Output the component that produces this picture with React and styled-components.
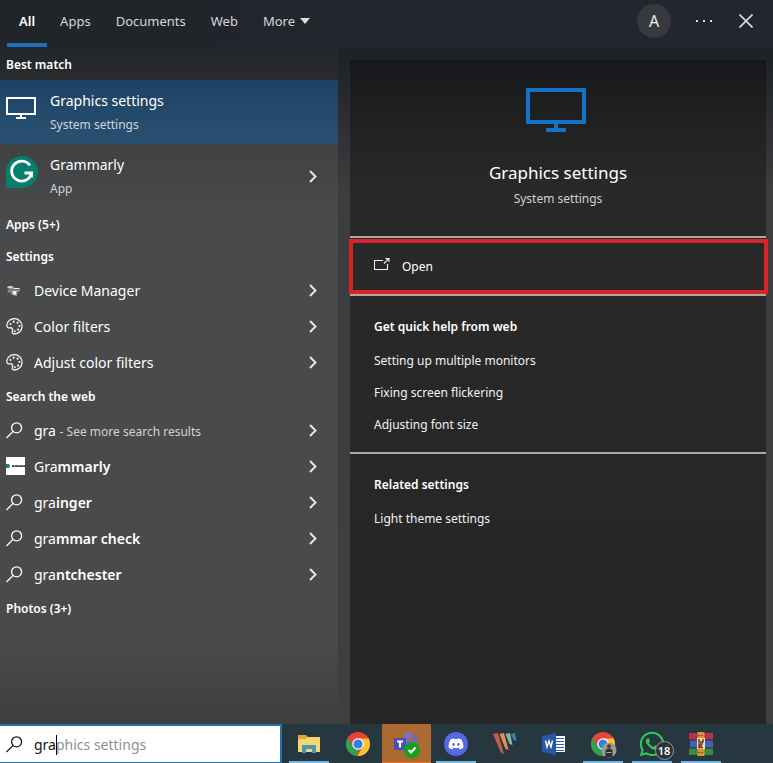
import React from 'react';
import styled, { createGlobalStyle } from 'styled-components';
import { FaDiscord, FaWhatsapp } from 'react-icons/fa';

const Global = createGlobalStyle`
  * { box-sizing: border-box; }
  body { margin: 0; background: #232323; font-family: "Noto Sans", "Open Sans", sans-serif; color: #fff; }
  button, input { font: inherit; color: inherit; }
  h2, h3, p { margin: 0; padding: 0; font: inherit; }
`;

const Page = styled.div`
  min-height: 100vh;
  display: flex;
  flex-direction: column;
`;

const Flyout = styled.main`
  flex: 1;
  display: flex;
  flex-direction: column;
  background: linear-gradient(180deg, #212429 0, #1f2226 60px, #3c3d3f 190px, #3e3f3f 100%);
`;

const Header = styled.header`
  display: flex;
  justify-content: space-between;
  height: 47px;
  background: linear-gradient(90deg, #212528, #22262e 50%, #23262e);
`;

const Tabs = styled.nav`
  display: flex;
  padding-left: 7px;
`;

const Tab = styled.button`
  display: flex;
  align-items: center;
  gap: 5px;
  padding: 0 12px 2px;
  margin-right: 1px;
  border: 0;
  border-bottom: 4px solid ${p => (p.$active ? '#1b6fbd' : 'transparent')};
  background: none;
  font-size: 13px;
  font-weight: ${p => (p.$active ? 600 : 400)};
  color: ${p => (p.$active ? '#fff' : '#d5d6d8')};
`;

const HeaderActions = styled.div`
  display: flex;
  align-items: center;
  gap: 8px;
  padding: 0 10px 5px 0;
`;

const IconButton = styled.button`
  display: grid;
  place-items: center;
  width: 34px;
  height: 34px;
  padding: 0;
  border: 0;
  border-radius: 50%;
  font-size: 16px;
  background: ${p => (p.$filled ? '#36393e' : 'none')};
  margin-right: ${p => (p.$filled ? '8px' : '0')};
  color: #eee;
`;

const Columns = styled.div`
  flex: 1;
  display: grid;
  grid-template-columns: minmax(0, 338fr) minmax(0, 435fr);
`;

const Results = styled.section`
  padding-top: 1px;
  background: linear-gradient(180deg, #23262a 0, #292b2f 40px, #414243 100px, #494a4b 170px, #4a4a4a 550px, #484949 600px, #3e4040 100%);
`;

const GroupTitle = styled.h2`
  display: flex;
  align-items: center;
  height: 32px;
  padding-left: 6px;
  font-size: 12px;
  font-weight: 600;
`;

const Row = styled.button`
  display: flex;
  align-items: center;
  gap: ${p => (p.$large ? '12px' : '9px')};
  width: 100%;
  height: ${p => (p.$large ? '64px' : '36px')};
  padding: 0 21px 0 6px;
  border: 0;
  text-align: left;
  background: ${p => (p.$selected ? 'linear-gradient(#1e4263, #2a5172)' : 'none')};
`;

const RowIcon = styled.span`
  flex: none;
  display: flex;
  width: ${p => (p.$large ? '32px' : '19px')};
  padding-bottom: ${p => (p.$large ? '8px' : '0')};
`;

const RowText = styled.span`
  flex: 1;
  display: flex;
  flex-direction: column;
  padding-top: 2px;
  font-size: 14px;
  line-height: 24px;
  white-space: nowrap;
`;

const Sub = styled.span`
  font-size: 12px;
  color: #cfd4d8;
`;

const Strong = styled.b`
  font-weight: 600;
`;

const Preview = styled.section`
  display: flex;
  padding: 13px 7px 0 12px;
`;

const Card = styled.div`
  flex: 1;
  background: linear-gradient(180deg, #16181b 0, #202122 60px, #292929 130px, #282828 300px, #262626 100%);
`;

const Hero = styled.div`
  display: flex;
  flex-direction: column;
  align-items: center;
  height: 176px;
  padding: 28px 0 0;
`;

const HeroIcon = styled.div`
  display: flex;
  padding-right: 4px;
`;

const HeroTitle = styled.h2`
  margin-top: 28px;
  font-size: 17px;
  line-height: 26px;
`;

const HeroSub = styled.p`
  font-size: 12px;
  line-height: 26px;
  color: #d0d0d0;
`;

const OpenArea = styled.div`
  position: relative;
  height: 60px;
  border: solid #a9a9a9;
  border-width: 2px 0;
  &::after {
    content: '';
    position: absolute;
    inset: 1px -2px 0 -1px;
    border: 4px solid #d8232b;
    pointer-events: none;
  }
`;

const OpenButton = styled.button`
  display: flex;
  align-items: center;
  gap: 12px;
  width: 100%;
  height: 100%;
  padding: 0 24px;
  border: 0;
  background: none;
  font-size: 12px;
`;

const LinkSection = styled.section`
  padding: 15px 24px 11px;
  border-bottom: ${p => (p.$divided ? '2px solid #a9a9a9' : '0')};
`;

const SectionTitle = styled.h3`
  margin-bottom: 2px;
  font-size: 12px;
  line-height: 32px;
  font-weight: 600;
`;

const TextLink = styled.a`
  display: block;
  font-size: 12px;
  line-height: 32px;
  color: #f2f2f2;
  text-decoration: none;
`;

const Taskbar = styled.footer`
  display: flex;
  height: 39px;
  background: #263740;
`;

const SearchBox = styled.label`
  flex: 0 1 282px;
  display: flex;
  align-items: center;
  gap: 11px;
  padding: 1px 6px 0;
  border: 2px solid #2372ac;
  border-left: 0;
  border-bottom-width: 1px;
  background: #fff;
  color: #1b1b1b;
  font-size: 14px;
`;

const Field = styled.span`
  flex: 1;
  display: grid;
  align-items: center;
  line-height: 20px;
  > * { grid-area: 1 / 1; }
`;

const SearchInput = styled.input`
  width: 100%;
  min-width: 0;
  padding: 0;
  border: 0;
  outline: 0;
  background: none;
  color: #111;
`;

const Completion = styled.span`
  display: flex;
  color: #8f8f8f;
  pointer-events: none;
`;

const Typed = styled.span`
  color: transparent;
  box-shadow: 1px 0 #000;
`;

const Apps = styled.div`
  display: flex;
  padding-left: 2px;
`;

const AppButton = styled.button`
  display: grid;
  place-items: center;
  width: 49px;
  padding: 0;
  border: 0;
  background: linear-gradient(${p => p.$line || 'transparent'}, ${p => p.$line || 'transparent'}) center bottom / ${p => (p.$alert ? '100%' : '40px')} ${p => (p.$alert ? '1px' : '2px')} no-repeat ${p => (p.$alert ? '#ac6931' : 'transparent')};
`;

const Monitor = ({ width, color }) => (
  <svg width={width} height={width * 22 / 30} viewBox="0 0 30 22" fill={color} aria-hidden="true">
    <path fillRule="evenodd" d="M0 0H30V18H16V20H20V22H10V20H14V18H0ZM2 2V16H28V2Z" />
  </svg>
);

const Chevron = () => (
  <svg width="8" height="13" viewBox="0 0 8 13" fill="none" stroke="#e4e4e4" strokeWidth="2" aria-hidden="true"><path d="M1 1L6.5 6.5L1 12" /></svg>
);

const SearchIcon = () => (
  <svg width="17" height="17" viewBox="0 0 17 17" fill="none" stroke="currentColor" strokeWidth="1.3" aria-hidden="true">
    <circle cx="10.6" cy="5.8" r="5" /><path d="M7.1 9.4L0.5 16" />
  </svg>
);

const GrammarlyIcon = () => (
  <svg width="32" height="33" viewBox="0 0 32 33" aria-hidden="true">
    <path d="M0 32V16A16 16 0 1 1 16 32Z" fill="#087e6c" />
    <path d="M24 9.5A10 10 0 1 0 25.5 17H18.5M25.5 15.5V21.5" fill="none" stroke="#fff" strokeWidth="2.8" />
  </svg>
);

const Palette = () => (
  <svg width="17" height="17" viewBox="0 0 17 17" fill="none" stroke="#f2f2f2" strokeWidth="1.3" aria-hidden="true">
    <path d="M.7 7.3A7.7 7.7 0 1 1 8.5 16C6.4 16 6 14.8 6.4 13.2C6.9 11.2 6.1 9.5 4.5 9.8C2.7 10.2.7 9.7.7 7.3Z" />
    <g fill="#f2f2f2" stroke="none"><circle cx="4.5" cy="6" r="1.1" /><circle cx="7.7" cy="3.7" r="1.1" /><circle cx="11.6" cy="4.7" r="1.1" /><circle cx="13.4" cy="8" r="1.1" /><circle cx="12" cy="11.6" r="1.1" /><circle cx="8.8" cy="13.2" r="1" /></g>
  </svg>
);

const DeviceIcon = () => (
  <svg width="15" height="15" viewBox="0 0 15 15" aria-hidden="true">
    <path d="M1 4L6 3L9 5L14 5L13.5 8L11 10V13L6 12L5 10L1 9L3 7Z" fill="#9ba1a2" />
    <path d="M1 4L5 3L7 4L3 5ZM8 5L14 5L12 6H8ZM7 8H10V12L7 11Z" fill="#eef0f0" />
    <path d="M1 5.5L7 7L13 6.5M3 8L6 9.5" stroke="#5c6264" fill="none" />
  </svg>
);

const GrammarlySite = () => (
  <svg width="19" height="18" viewBox="0 0 19 18" aria-hidden="true">
    <path fill="#fff" d="M0 0H19V18H0Z" /><path fill="#267b70" d="M0 7H3L4 9L3 11H0Z" /><path d="M6 9.2H19" stroke="#333" strokeWidth="1.8" strokeDasharray="2 .3 1.4 .2" />
  </svg>
);

const OpenIcon = () => (
  <svg width="16" height="16" viewBox="0 0 16 16" fill="none" stroke="#f2f2f2" strokeWidth="1.1" aria-hidden="true">
    <path d="M9 2.5H.5V11.5H13.5V6M10 5.5L14.8 .7M11.5 .6H15V4" />
  </svg>
);

const FolderIcon = () => (
  <svg width="22" height="20" viewBox="0 0 22 20" aria-hidden="true">
    <path fill="#dda63a" d="M0 1H8L10 3H22V18H0Z" /><path fill="#f6d872" d="M0 5H8L10 3H22V18H0Z" /><path fill="#4d94bd" d="M4 11H18V19H14V15H8V19H4Z" />
  </svg>
);

const ChromeIcon = ({ profile }) => (
  <svg width="24" height="24" viewBox="0 0 24 24" overflow="visible" aria-hidden="true">
    <circle cx="12" cy="12" r="12" fill="#e94335" />
    <path fill="#29a650" d="M1.6 6L6.8 15L12 17.2L11.5 24A12 12 0 0 1 1.6 6Z" />
    <path fill="#fcc42c" d="M12 6.5H22.7A12 12 0 0 1 11.5 24L17.2 14Z" />
    <circle cx="12" cy="12" r="5.8" fill="#fff" /><circle cx="12" cy="12" r="4.6" fill="#337fe8" />
    {profile && (
      <g>
        <circle cx="18" cy="18" r="7.5" fill="#999b92" />
        <path fill="#252f3d" d="M14.5 25V18.5L16.5 16.5H19.5L21.5 18.5V25Z" />
        <circle cx="18" cy="14.3" r="2" fill="#4a4039" />
        <path stroke="#b9a591" d="M15.5 20.5H20.5" />
      </g>
    )}
  </svg>
);

const TeamsIcon = () => (
  <svg width="28" height="28" viewBox="0 0 28 28" aria-hidden="true">
    <circle cx="15" cy="5.5" r="3.7" fill="#7b70c7" /><circle cx="22" cy="7" r="2.6" fill="#7064bb" /><path fill="#7468c5" d="M9 10H24V18L20 23H10Z" />
    <path fill="#4b50b4" d="M1 8H13V20H1Z" /><path d="M4 11.5H10M7 11.5V17.5" stroke="#fff" strokeWidth="2" /><circle cx="19" cy="20" r="8" fill="#16a01b" /><path d="M15.5 20L18 22.5L22.5 17.5" fill="none" stroke="#fff" strokeWidth="2" />
  </svg>
);

const DiscordMark = styled.span`
  display: grid;
  place-items: center;
  width: 24px;
  height: 24px;
  border-radius: 50%;
  background: #5668e8;
  color: #fff;
  font-size: 16px;
`;

const StripesIcon = () => (
  <svg width="24" height="24" viewBox="0 0 24 24" aria-hidden="true">
    <path fill="#c35c4d" d="M0 2L5 1L11 22L8 21Z" /><path fill="#e88d55" d="M6.5 2L11 1L15.5 18L12.5 17Z" /><path fill="#86b89d" d="M12.5 2L17 1L19.5 13L16.5 12Z" /><path fill="#3d7fa9" d="M18 2L22 1L23.5 9L20.5 8Z" />
  </svg>
);

const WordIcon = () => (
  <svg width="24" height="22" viewBox="0 0 24 22" aria-hidden="true">
    <path fill="#f6f8fb" d="M12 3H23V19H12Z" /><path stroke="#315da1" d="M14 5.5H22M14 8.5H22M14 11.5H22M14 14.5H22M14 17.5H22" /><path fill="#2559a5" d="M0 3L14 0V22L0 19Z" /><path fill="none" stroke="#fff" strokeWidth="1.4" d="M3.5 7.5L5 14L7 8L9 14L10.5 7.5" />
  </svg>
);

const RarIcon = () => (
  <svg width="24" height="24" viewBox="0 0 24 24" aria-hidden="true">
    <path fill="#b62e50" d="M0 1H24V8H0Z" /><path fill="#3d62b5" d="M1 8H24V16H1Z" /><path fill="#398b3f" d="M0 16H24V23H0Z" />
    <path stroke="#292830" d="M0 8H24M0 16H24" /><path fill="#d3963f" d="M8.5 0H15.5V24H8.5Z" /><path stroke="#8c4c28" d="M9 3.5H15M9 20.5H15" strokeDasharray="2 1" />
    <path fill="#f0e1b4" d="M8 6H16V17H8Z" /><path stroke="#7b3326" fill="none" strokeWidth="1.6" d="M10 7V10H14V7M14 12H10V15.5H14M10 13.8H13" />
  </svg>
);

const WithBadge = styled.span`
  position: relative;
  display: flex;
  font-size: 28px;
  color: #35c75a;
`;

const Badge = styled.span`
  position: absolute;
  left: 17px;
  top: 11px;
  display: grid;
  place-items: center;
  width: 19px;
  height: 19px;
  border: 1px solid #90989b;
  border-radius: 50%;
  background: #2b3438;
  color: #fff;
  font-size: 11px;
  font-weight: 600;
`;

const ResultRow = ({ icon, children }) => (
  <Row><RowIcon>{icon}</RowIcon><RowText><span>{children}</span></RowText><Chevron /></Row>
);

export default function App() {
  const line = '#76b5e5';
  return (
    <Page>
      <Global />
      <Flyout>
        <Header>
          <Tabs aria-label="Search categories">
            <Tab $active>All</Tab><Tab>Apps</Tab><Tab>Documents</Tab><Tab>Web</Tab>
            <Tab>More <svg width="10" height="6" viewBox="0 0 10 6" fill="#ddd" aria-hidden="true"><path d="M0 0H10L5 6Z" /></svg></Tab>
          </Tabs>
          <HeaderActions>
            <IconButton $filled aria-label="Account">A</IconButton>
            <IconButton aria-label="Options"><svg width="16" height="2" fill="#ddd"><path d="M0 0H2V2H0ZM7 0H9V2H7ZM14 0H16V2H14Z" /></svg></IconButton>
            <IconButton aria-label="Close"><svg width="14" height="14" stroke="#ddd" strokeWidth="1.6"><path d="M.5 .5L13.5 13.5M13.5 .5L.5 13.5" /></svg></IconButton>
          </HeaderActions>
        </Header>
        <Columns>
          <Results>
            <GroupTitle>Best match</GroupTitle>
            <Row $large $selected><RowIcon $large><Monitor width={30} color="#fff" /></RowIcon><RowText>Graphics settings<Sub>System settings</Sub></RowText></Row>
            <Row $large><RowIcon $large><GrammarlyIcon /></RowIcon><RowText>Grammarly<Sub>App</Sub></RowText><Chevron /></Row>
            <GroupTitle>Apps (5+)</GroupTitle>
            <GroupTitle>Settings</GroupTitle>
            <ResultRow icon={<DeviceIcon />}>Device Manager</ResultRow>
            <ResultRow icon={<Palette />}>Color filters</ResultRow>
            <ResultRow icon={<Palette />}>Adjust color filters</ResultRow>
            <GroupTitle>Search the web</GroupTitle>
            <ResultRow icon={<SearchIcon />}>gra <Sub>- See more search results</Sub></ResultRow>
            <ResultRow icon={<GrammarlySite />}>Gra<Strong>mmarly</Strong></ResultRow>
            <ResultRow icon={<SearchIcon />}>gra<Strong>inger</Strong></ResultRow>
            <ResultRow icon={<SearchIcon />}>gra<Strong>mmar check</Strong></ResultRow>
            <ResultRow icon={<SearchIcon />}>gra<Strong>ntchester</Strong></ResultRow>
            <GroupTitle>Photos (3+)</GroupTitle>
          </Results>
          <Preview>
            <Card>
              <Hero><HeroIcon><Monitor width={60} color="#1473c4" /></HeroIcon><HeroTitle>Graphics settings</HeroTitle><HeroSub>System settings</HeroSub></Hero>
              <OpenArea><OpenButton><OpenIcon />Open</OpenButton></OpenArea>
              <LinkSection $divided>
                <SectionTitle>Get quick help from web</SectionTitle>
                <TextLink href="#monitors">Setting up multiple monitors</TextLink>
                <TextLink href="#flicker">Fixing screen flickering</TextLink>
                <TextLink href="#font">Adjusting font size</TextLink>
              </LinkSection>
              <LinkSection>
                <SectionTitle>Related settings</SectionTitle>
                <TextLink href="#theme">Light theme settings</TextLink>
              </LinkSection>
            </Card>
          </Preview>
        </Columns>
      </Flyout>
      <Taskbar>
        <SearchBox>
          <SearchIcon />
          <Field>
            <Completion aria-hidden="true"><Typed>gra</Typed>phics settings</Completion>
            <SearchInput aria-label="Search" defaultValue="gra" />
          </Field>
        </SearchBox>
        <Apps>
          <AppButton aria-label="File Explorer" $line={line}><FolderIcon /></AppButton>
          <AppButton aria-label="Chrome"><ChromeIcon /></AppButton>
          <AppButton aria-label="Teams" $alert $line="#ed792b"><TeamsIcon /></AppButton>
          <AppButton aria-label="Discord" $line={line}><DiscordMark><FaDiscord /></DiscordMark></AppButton>
          <AppButton aria-label="Stripes"><StripesIcon /></AppButton>
          <AppButton aria-label="Word"><WordIcon /></AppButton>
          <AppButton aria-label="Chrome profile" $line={line}><ChromeIcon profile /></AppButton>
          <AppButton aria-label="WhatsApp" $line={line}><WithBadge><FaWhatsapp /><Badge>18</Badge></WithBadge></AppButton>
          <AppButton aria-label="WinRAR" $line={line}><RarIcon /></AppButton>
        </Apps>
      </Taskbar>
    </Page>
  );
}
